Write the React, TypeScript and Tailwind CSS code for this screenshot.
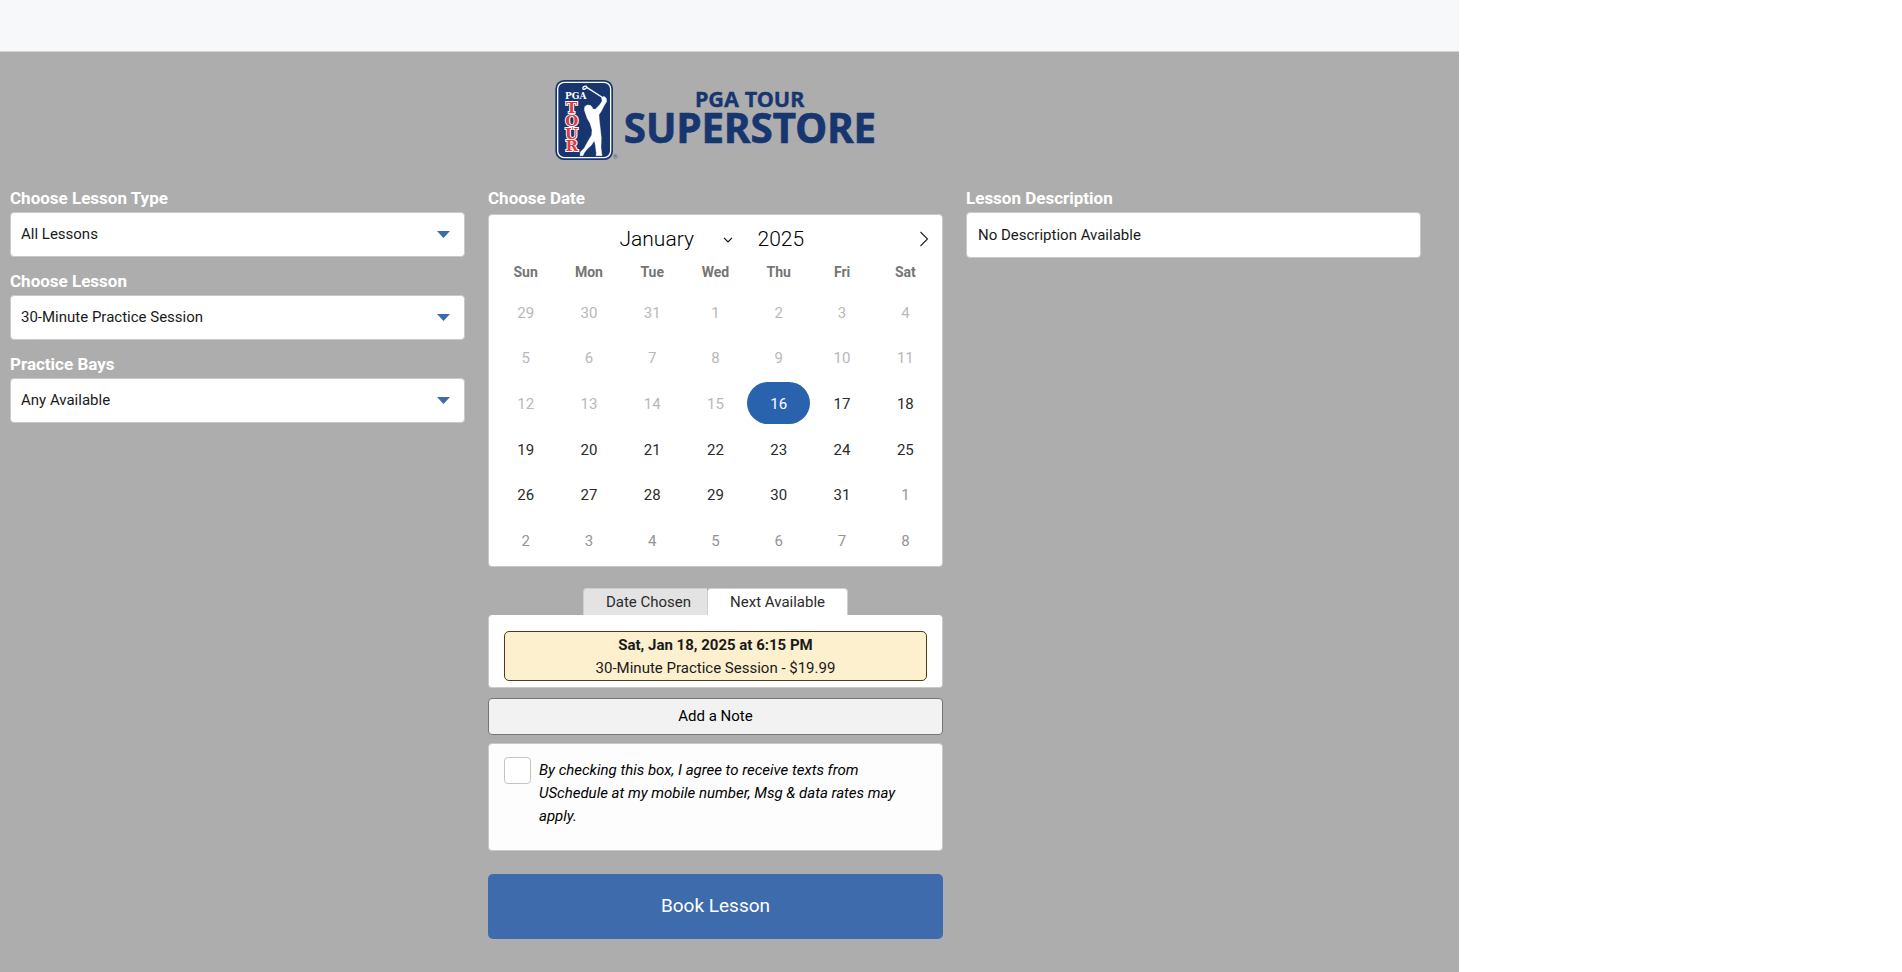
import { useState } from "react";

const CARD = "rounded-[4px] border border-[#c9c9c9] bg-white";
const HEADING = "block text-[17px] leading-[24px] font-bold text-white";
const WEEKDAYS = ["Sun", "Mon", "Tue", "Wed", "Thu", "Fri", "Sat"];
const MONTHS = [
  "January", "February", "March", "April", "May", "June",
  "July", "August", "September", "October", "November", "December",
];

// Six weeks starting on Sunday, December 29, 2024.
const WEEKS = Array.from({ length: 6 }, (_, week) =>
  Array.from({ length: 7 }, (_, day) => new Date(2024, 11, 29 + week * 7 + day)),
);
const TODAY = new Date(2025, 0, 16);

function Logo() {
  return (
    <svg viewBox="45 27 966 246" className="h-[82px] w-[322px]" role="img" aria-label="PGA TOUR Superstore">
      <rect x="46" y="30" width="173" height="240" rx="26" fill="#17356f" />
      <rect x="53" y="37" width="159" height="226" rx="20" fill="none" stroke="#fff" strokeWidth="4" />
      <g fill="#fff" stroke="#fff" strokeLinejoin="round" strokeLinecap="round">
        <path d="M140 49 C132 47 127 52 129 57 C132 60 136 57 140 52 L190 84" fill="none" strokeWidth="4" />
        <path
          strokeWidth="1"
          d="M185 83 L192 79 L199 85 L200 95 L193 106 L184 124 L177 134 L178 150 L181 176 L184 204 L183 232 L186 257 L168 257 L169 250 L166 226 L163 212 L154 226 L141 238 L133 248 L129 257 L120 257 L121 246 L133 234 L143 215 L155 195 L156 180 L150 160 L142 146 L137 132 L133 121 L134 110 L141 105 L151 106 L157 112 L158 117 L166 118 L179 104 L186 94 Z"
        />
      </g>
      <text x="107" y="88" textAnchor="middle" fill="#fff" fontFamily="DejaVu Serif, serif" fontWeight="700" fontSize="27">PGA</text>
      <g
        fill="#e03a3e" stroke="#fff" strokeWidth="6" paintOrder="stroke" textAnchor="middle"
        fontFamily="DejaVu Serif, serif" fontWeight="700" fontSize="45"
      >
        <text x="95" y="130">T</text>
        <text x="95" y="168">O</text>
        <text x="95" y="206">U</text>
        <text x="95" y="243">R</text>
      </g>
      <text x="226" y="268" textAnchor="middle" fill="#4b6290" fontFamily="Roboto, sans-serif" fontSize="18">®</text>
      <g fill="#17356f" stroke="#17356f" textAnchor="middle" fontFamily="Noto Sans, sans-serif" fontWeight="700">
        <text x="629" y="111" fontSize="65" strokeWidth="1">PGA TOUR</text>
        <text x="630" y="218" fontSize="121" strokeWidth="2">SUPERSTORE</text>
      </g>
    </svg>
  );
}

function SelectField({ id, label, value }: { id: string; label: string; value: string }) {
  return (
    <div>
      <label htmlFor={id} className={`${HEADING} mb-[2px]`}>
        {label}
      </label>
      <div className="relative">
        <select id={id} className={`${CARD} h-[45px] w-full appearance-none px-[10px] text-[15px] text-[#1a1a1a]`}>
          <option>{value}</option>
        </select>
        <svg viewBox="0 0 13 7" className="pointer-events-none absolute top-[19px] right-[15px] h-[7px] w-[13px]" aria-hidden="true">
          <path d="M0 0 H13 L6.5 7 Z" fill="#3d6bab" />
        </svg>
      </div>
    </div>
  );
}

function Calendar() {
  const [selected, setSelected] = useState(TODAY.getTime());

  return (
    <div className={`${CARD} px-[5px] pb-[3px]`}>
      <div className="relative flex h-[50px] items-center justify-center text-[21px] font-light text-black">
        <div className="relative">
          <select aria-label="Month" className="w-[126px] appearance-none bg-transparent pl-[10px]">
            {MONTHS.map((month) => (
              <option key={month}>{month}</option>
            ))}
          </select>
          <svg viewBox="0 0 10 6" className="pointer-events-none absolute top-[13px] right-[3px] h-[6px] w-[10px]" aria-hidden="true">
            <path d="M1 0.8 L5 4.8 L9 0.8" fill="none" stroke="#111" strokeWidth="1.2" />
          </svg>
        </div>
        <input aria-label="Year" defaultValue="2025" className="ml-[22px] w-[64px] bg-transparent" />
        <button aria-label="Next month" className="absolute top-[16px] right-[8px]">
          <svg viewBox="0 0 10 16" className="h-[16px] w-[10px]" aria-hidden="true">
            <path d="M1.5 1 L8.5 8 L1.5 15" fill="none" stroke="#222" strokeWidth="1.1" />
          </svg>
        </button>
      </div>
      <table className="w-full table-fixed text-center">
        <thead>
          <tr className="text-[14px] leading-[14px] text-[#757575]">
            {WEEKDAYS.map((day) => (
              <th key={day} className="p-0 pb-[10px] font-bold">{day}</th>
            ))}
          </tr>
        </thead>
      </table>
      <table className="h-[274px] w-full table-fixed text-center" aria-label="Days">
        <tbody>
          {WEEKS.map((week) => (
            <tr key={week[0].getTime()}>
              {week.map((date) => {
                const time = date.getTime();
                const past = time < TODAY.getTime();
                const color =
                  time === selected
                    ? "bg-[#2962ad] text-white"
                    : past
                      ? "text-[#b8b8b8]"
                      : date.getMonth() === 1
                        ? "text-[#949494]"
                        : "text-[#2b2b2b]";
                return (
                  <td key={time} className="p-0">
                    <button
                      disabled={past}
                      onClick={() => setSelected(time)}
                      className={`block h-[42px] w-full rounded-full pt-[2px] text-[15px] ${color}`}
                    >
                      {date.getDate()}
                    </button>
                  </td>
                );
              })}
            </tr>
          ))}
        </tbody>
      </table>
    </div>
  );
}

function Availability() {
  return (
    <section className="mt-[21px]">
      <div className="flex justify-center text-[15px] leading-[24px] text-[#2b2b2b]" role="tablist">
        <button role="tab" aria-selected="false" className="h-[27px] rounded-tl-[4px] border border-r-0 border-b-0 border-[#cfcfcf] bg-[#e3e3e3] pr-[16px] pl-[22px]">
          Date Chosen
        </button>
        <button role="tab" aria-selected="true" className="h-[27px] rounded-t-[4px] border border-b-0 border-[#cfcfcf] bg-white px-[22px]">
          Next Available
        </button>
      </div>
      <div className={`${CARD} border-t-0 px-[15px] pt-[16px] pb-[6px]`}>
        <button className="block w-full rounded-[5px] border border-[#4b3d14] bg-[#fcf0ce] pt-[2px] text-[15px] leading-[23px] text-[#1a1a1a]">
          <span className="block font-bold">Sat, Jan 18, 2025 at 6:15 PM</span>
          <span className="block">30-Minute Practice Session - $19.99</span>
        </button>
      </div>
    </section>
  );
}

export default function App() {
  return (
    <div className="min-h-screen bg-white font-[Roboto,sans-serif]">
      <div className="flex min-h-screen w-full max-w-[1459px] flex-col bg-[#adadad]">
        <header className="h-[52px] border-b border-[#cfd3d6] bg-[#f6f8fa]" />
        <main className="pr-[38px] pb-[24px] pl-[10px]">
          <div className="flex justify-center pt-[27px]">
            <Logo />
          </div>
          <div className="mt-[25px] grid grid-cols-3 items-start gap-[23px]">
            <div className="flex flex-col gap-[12px]">
              <SelectField id="lesson-type" label="Choose Lesson Type" value="All Lessons" />
              <SelectField id="lesson" label="Choose Lesson" value="30-Minute Practice Session" />
              <SelectField id="bays" label="Practice Bays" value="Any Available" />
            </div>

            <div>
              <h2 className={`${HEADING} mb-[4px]`}>Choose Date</h2>
              <Calendar />
              <Availability />
              <button className="mt-[10px] h-[37px] w-full rounded-[4px] border border-[#757575] bg-[#f2f2f2] text-[15px] text-black">
                Add a Note
              </button>
              <label className="mt-[8px] flex h-[108px] gap-[8px] rounded-[4px] border border-[#c9c9c9] bg-[#fdfdfd] px-[15px] pt-[13px]">
                <input type="checkbox" className="h-[27px] w-[27px] shrink-0 appearance-none rounded-[4px] border border-[#c4c4c4] bg-white checked:bg-[#3d6bab]" />
                <span className="pt-[2px] text-[15px] leading-[23px] text-black italic">
                  By checking this box, I agree to receive texts from USchedule at my mobile number, Msg &amp; data
                  rates may apply.
                </span>
              </label>
              <button className="mt-[23px] h-[65px] w-full rounded-[5px] bg-[#3d6bab] text-[19px] text-white">
                Book Lesson
              </button>
            </div>

            <div>
              <h2 className={`${HEADING} mb-[2px]`}>Lesson Description</h2>
              <p className={`${CARD} px-[11px] py-[11px] text-[15px] leading-[22px] text-[#1a1a1a]`}>
                No Description Available
              </p>
            </div>
          </div>
        </main>
      </div>
    </div>
  );
}
